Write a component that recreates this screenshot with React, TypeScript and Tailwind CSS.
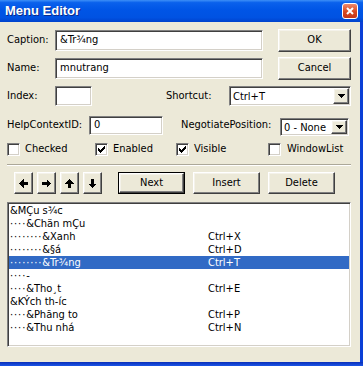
import React from "react";

const sunken =
  "border border-t-[#808080] border-l-[#808080] border-b-white border-r-white shadow-[inset_1px_1px_0_#404040,inset_-1px_-1px_0_#d4d0c8] bg-white";
const raised =
  "border border-t-white border-l-white border-b-[#404040] border-r-[#404040] shadow-[inset_-1px_-1px_0_#808080,inset_1px_1px_0_#f4f2ea] bg-[#ECE9D8]";

function Button({ w, h, children, def }: { w: string; h: string; children: React.ReactNode; def?: boolean }) {
  if (def) {
    return (
      <div className={`${w} ${h} border border-black flex`}>
        <div className={`flex-1 ${raised} flex items-center justify-center`}>{children}</div>
      </div>
    );
  }
  return <div className={`${w} ${h} ${raised} flex items-center justify-center`}>{children}</div>;
}

function DropButton() {
  return (
    <div className={`w-[16px] h-full ${raised} flex items-center justify-center`}>
      <svg width="7" height="4" viewBox="0 0 7 4" shapeRendering="crispEdges">
        <polygon points="0,0 7,0 3.5,4" fill="#000" />
      </svg>
    </div>
  );
}

function Select({ w, h, value }: { w: string; h: string; value: string }) {
  return (
    <div className={`${w} ${h} ${sunken} flex p-[1px]`}>
      <div className="flex-1 pl-[2px] flex items-center leading-none">{value}</div>
      <DropButton />
    </div>
  );
}

function Check({ checked }: { checked?: boolean }) {
  return (
    <div className={`w-[13px] h-[13px] ${sunken} flex items-center justify-center shrink-0`}>
      {checked && (
        <svg width="7" height="7" viewBox="0 0 7 7" shapeRendering="crispEdges">
          <path d="M0 2h1v1h1v1h1v-1h1v-1h1v-1h1v-1h1v3h-1v1h-1v1h-1v1h-1v1h-1v-1h-1v-1h-1z" fill="#000" />
        </svg>
      )}
    </div>
  );
}

function Arrow({ dir }: { dir: "l" | "r" | "u" | "d" }) {
  const rot = dir === "l" ? 0 : dir === "r" ? 180 : dir === "u" ? 90 : 270;
  return (
    <svg width="9" height="9" viewBox="0 0 9 9" shapeRendering="crispEdges" style={{ transform: `rotate(${rot}deg)` }}>
      <polygon points="0,4.5 4.5,0 4.5,9" fill="#000" />
      <rect x="4" y="3" width="5" height="3" fill="#000" />
    </svg>
  );
}

const rows: { d: number; t: string; s?: string; sel?: boolean }[] = [
  { d: 0, t: "&MÇu s¾c" },
  { d: 1, t: "&Chän mÇu" },
  { d: 2, t: "&Xanh", s: "Ctrl+X" },
  { d: 2, t: "&§á", s: "Ctrl+D" },
  { d: 2, t: "&Tr¾ng", s: "Ctrl+T", sel: true },
  { d: 1, t: "-" },
  { d: 1, t: "&Tho¸t", s: "Ctrl+E" },
  { d: 0, t: "&KÝch th-íc" },
  { d: 1, t: "&Phãng to", s: "Ctrl+P" },
  { d: 1, t: "&Thu nhá", s: "Ctrl+N" },
];

export default function App() {
  return (
    <div className="w-[363px] h-[366px] flex flex-col text-[11px] text-black font-['DejaVu_Sans_Condensed','DejaVu_Sans',sans-serif] overflow-hidden">
      {/* title bar */}
      <div className="h-[22px] shrink-0 flex items-center pl-[5px] pr-[5px] bg-[linear-gradient(to_bottom,#3d8ff7_0%,#0a61ec_12%,#0055e6_45%,#0052e2_80%,#0042cc_100%)]">
        <div className="flex-1 text-white font-bold text-[13px] font-['Liberation_Sans',sans-serif] [text-shadow:1px_1px_0_#0a2a8a]">
          Menu Editor
        </div>
        <div className="w-[16px] h-[16px] rounded-[3px] border border-white bg-[linear-gradient(to_bottom,#ee8a6c,#d9481f_55%,#c4361a)] flex items-center justify-center">
          <svg width="8" height="8" viewBox="0 0 8 8">
            <path d="M1 1L7 7M7 1L1 7" stroke="#fff" strokeWidth="2" />
          </svg>
        </div>
      </div>
      <div className="flex-1 flex min-h-0">
        <div className="flex-1 bg-[#ECE9D8] flex flex-col pl-[7px]">
          {/* Caption */}
          <div className="mt-[7px] h-[23px] flex items-center">
            <div className="w-[48px]">Caption:</div>
            <div className={`w-[208px] h-[21px] ${sunken} flex items-center pl-[4px]`}>&amp;Tr¾ng</div>
            <div className="ml-[15px]">
              <Button w="w-[73px]" h="h-[23px]">OK</Button>
            </div>
          </div>
          {/* Name */}
          <div className="mt-[5px] h-[23px] flex items-center">
            <div className="w-[48px]">Name:</div>
            <div className={`w-[208px] h-[21px] ${sunken} flex items-center pl-[4px]`}>mnutrang</div>
            <div className="ml-[15px]">
              <Button w="w-[73px]" h="h-[23px]">Cancel</Button>
            </div>
          </div>
          {/* Index / Shortcut */}
          <div className="mt-[6px] h-[20px] flex items-center">
            <div className="w-[48px]">Index:</div>
            <div className={`w-[37px] h-[20px] ${sunken}`}></div>
            <div className="ml-[74px] w-[63px]">Shortcut:</div>
            <Select w="w-[122px]" h="h-[20px]" value="Ctrl+T" />
          </div>
          {/* HelpContextID / NegotiatePosition */}
          <div className="mt-[9px] h-[20px] flex items-center">
            <div className="w-[82px]">HelpContextID:</div>
            <div className={`w-[74px] h-[19px] ${sunken} flex items-center pl-[4px]`}>0</div>
            <div className="ml-[18px] w-[99px]">NegotiatePosition:</div>
            <div className="mt-[4px]">
              <Select w="w-[69px]" h="h-[18px]" value="0 - None" />
            </div>
          </div>
          {/* checkboxes */}
          <div className="mt-[8px] h-[13px] flex items-center">
            <div className="w-[88px] flex items-center gap-[5px]">
              <Check />
              <span>Checked</span>
            </div>
            <div className="w-[81px] flex items-center gap-[5px]">
              <Check checked />
              <span>Enabled</span>
            </div>
            <div className="w-[92px] flex items-center gap-[5px]">
              <Check checked />
              <span>Visible</span>
            </div>
            <div className="flex items-center gap-[6px]">
              <Check />
              <span>WindowList</span>
            </div>
          </div>
          {/* separator */}
          <div className="mt-[8px] w-[344px] h-[2px] border-t border-t-[#aca899] border-b border-b-white"></div>
          {/* buttons */}
          <div className="mt-[6px] h-[22px] flex items-center">
            <div className="ml-[7px] flex gap-[4px]">
              <Button w="w-[19px]" h="h-[22px]"><Arrow dir="l" /></Button>
              <Button w="w-[19px]" h="h-[22px]"><Arrow dir="r" /></Button>
              <Button w="w-[19px]" h="h-[22px]"><Arrow dir="u" /></Button>
              <Button w="w-[19px]" h="h-[22px]"><Arrow dir="d" /></Button>
            </div>
            <div className="ml-[16px]">
              <Button w="w-[67px]" h="h-[22px]" def>Next</Button>
            </div>
            <div className="ml-[8px]">
              <Button w="w-[67px]" h="h-[22px]">Insert</Button>
            </div>
            <div className="ml-[8px]">
              <Button w="w-[67px]" h="h-[22px]">Delete</Button>
            </div>
          </div>
          {/* list */}
          <div className={`mt-[8px] w-[344px] h-[145px] ${sunken} p-[1px]`}>
            <div className="flex flex-col">
              {rows.map((r, i) => (
                <div
                  key={i}
                  className={`h-[13px] flex items-center leading-none whitespace-pre ${r.sel ? "bg-[#316AC5] text-white" : ""}`}
                >
                  <div className="w-[199px] pl-[1px] flex">
                    {r.d > 0 && (
                      <span className="tracking-[0.9px]">{r.d === 1 ? "····" : "········"}</span>
                    )}
                    <span>{r.t}</span>
                  </div>
                  <div>{r.s ?? ""}</div>
                </div>
              ))}
            </div>
          </div>
        </div>
        <div className="w-[3px] bg-[#0a3fd6]"></div>
      </div>
      <div className="h-[4px] shrink-0 bg-[linear-gradient(to_bottom,#0a2fb8,#1b55e6)]"></div>
    </div>
  );
}
